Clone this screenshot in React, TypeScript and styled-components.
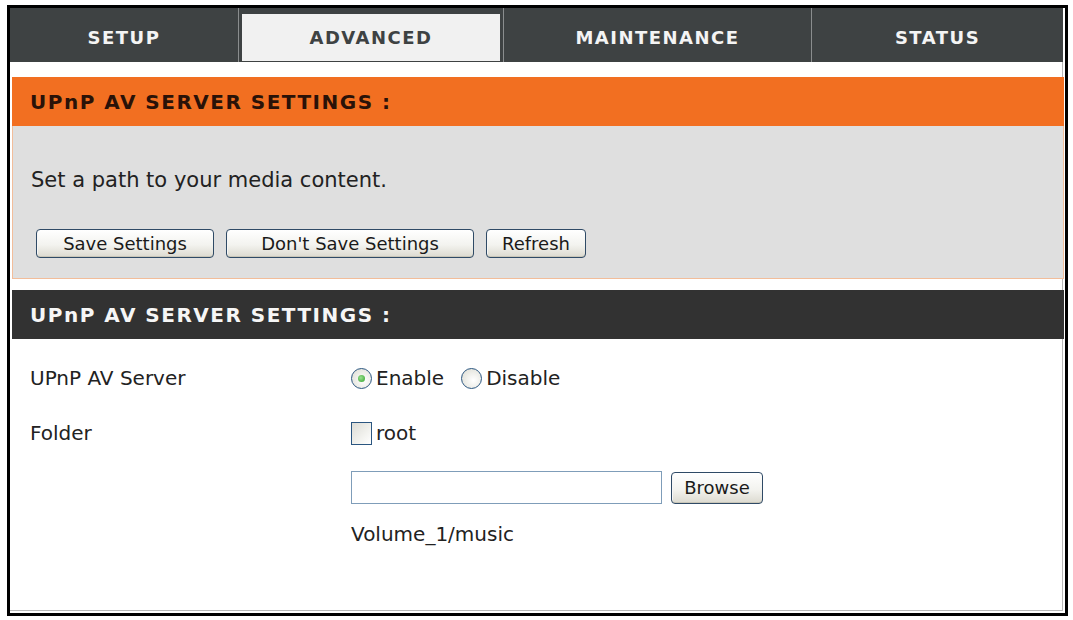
import React from 'react';
import styled, { createGlobalStyle } from 'styled-components';

const GlobalStyle = createGlobalStyle`
  html, body {
    margin: 0;
    padding: 0;
    background: #ffffff;
  }
  body {
    font-family: "DejaVu Sans", Verdana, sans-serif;
    color: #222222;
  }
`;

const Frame = styled.div`
  box-sizing: border-box;
  width: 1061px;
  height: 611px;
  margin: 5px 0 0 7px;
  border: 3px solid #000000;
  background: #ffffff;
  box-shadow: inset -2px -2px 0 #ffffff, inset -3px -3px 0 #b8b8b8;
  display: flex;
  flex-direction: column;
`;

const TabBar = styled.div`
  display: grid;
  grid-template-columns: 228px 264px 307px 1fr;
  column-gap: 1px;
  height: 54px;
  margin-right: 2px;
  background: #8a8d8e;
`;

const Tab = styled.div<{ $active?: boolean }>`
  display: flex;
  align-items: center;
  justify-content: center;
  background: ${p => (p.$active ? '#f1f1f1' : '#3e4243')};
  color: ${p => (p.$active ? '#3e4243' : '#f4f4f4')};
  border: ${p => (p.$active ? '3px solid #3e4243' : 'none')};
  border-top-width: ${p => (p.$active ? '6px' : '0')};
  border-bottom-width: ${p => (p.$active ? '1px' : '0')};
  font-family: "DejaVu Sans", Verdana, sans-serif;
  font-weight: bold;
  font-size: 18px;
  letter-spacing: 1.5px;
  padding-top: ${p => (p.$active ? '0' : '4px')};
`;

const Section = styled.div<{ $top: number }>`
  margin: ${p => p.$top}px 1px 0 2px;
`;

const SectionHead = styled.div<{ $tone: 'orange' | 'dark' }>`
  height: 49px;
  display: flex;
  align-items: center;
  padding-left: 18px;
  background: ${p => (p.$tone === 'orange' ? '#f26f21' : '#323232')};
  color: ${p => (p.$tone === 'orange' ? '#2a1208' : '#f6f6f6')};
  font-family: "DejaVu Sans", Verdana, sans-serif;
  font-weight: bold;
  font-size: 20px;
  letter-spacing: 1.5px;
`;

const GreyBox = styled.div`
  box-sizing: border-box;
  height: 153px;
  background: #dfdfdf;
  border: 1px solid #f2bd9a;
  border-top: none;
  padding: 42px 0 0 18px;
`;

const Description = styled.div`
  font-size: 21px;
  line-height: 24px;
  color: #222222;
`;

const ButtonRow = styled.div`
  display: flex;
  gap: 12px;
  margin-top: 37px;
  padding-left: 5px;
`;

const XPButton = styled.button<{ $w: number; $h?: number }>`
  box-sizing: border-box;
  width: ${p => p.$w}px;
  height: ${p => p.$h ?? 29}px;
  padding: 0;
  border: 1px solid #2f4a66;
  border-radius: 4px;
  background: linear-gradient(#ffffff 0%, #f3f3ef 55%, #dcdad0 100%);
  box-shadow: inset 0 -1px 0 #c9c6b8, inset 1px 0 0 #f6f6f6;
  font-family: "DejaVu Sans", Verdana, sans-serif;
  font-size: 18px;
  color: #1a1a1a;
`;

const FormArea = styled.div`
  margin: 0 1px 0 2px;
  padding: 19px 0 0 18px;
  display: grid;
  grid-template-columns: 321px 1fr;
  align-items: center;
`;

const Label = styled.div<{ $h: number; $gap?: number }>`
  height: ${p => p.$h}px;
  margin-top: ${p => p.$gap ?? 0}px;
  display: flex;
  align-items: center;
  font-size: 20px;
  color: #222222;
`;

const Field = styled.div<{ $h: number; $gap?: number }>`
  height: ${p => p.$h}px;
  margin-top: ${p => p.$gap ?? 0}px;
  display: flex;
  align-items: center;
  font-size: 20px;
  color: #222222;
`;

const Radio = styled.span<{ $on?: boolean }>`
  box-sizing: border-box;
  width: 21px;
  height: 21px;
  border-radius: 50%;
  border: 1px solid #2b5680;
  background: radial-gradient(circle at 60% 60%, #ffffff 0%, #e6e6df 70%, #d4d2c8 100%);
  display: inline-flex;
  align-items: center;
  justify-content: center;
  margin-right: 4px;
  &::after {
    content: '';
    width: 7px;
    height: 7px;
    border-radius: 50%;
    background: ${p => (p.$on ? 'radial-gradient(circle at 40% 40%, #9be08f, #2fa22a)' : 'transparent')};
  }
`;

const Gap = styled.span`
  width: 17px;
`;

const Checkbox = styled.span`
  box-sizing: border-box;
  width: 21px;
  height: 23px;
  border: 1px solid #2b5680;
  background: linear-gradient(135deg, #dcdcd6 0%, #f2f2ee 60%, #ffffff 100%);
  margin-right: 4px;
`;

const TextInput = styled.input`
  box-sizing: border-box;
  width: 311px;
  height: 33px;
  border: 1px solid #7f9db9;
  background: #ffffff;
  margin: 0 9px 0 0;
`;

const EmptyCell = styled.div``;

export default function App() {
  return (
    <>
      <GlobalStyle />
      <Frame>
        <TabBar>
          <Tab>SETUP</Tab>
          <Tab $active>ADVANCED</Tab>
          <Tab>MAINTENANCE</Tab>
          <Tab>STATUS</Tab>
        </TabBar>

        <Section $top={15}>
          <SectionHead $tone="orange">UPnP AV SERVER SETTINGS :</SectionHead>
          <GreyBox>
            <Description>Set a path to your media content.</Description>
            <ButtonRow>
              <XPButton $w={178}>Save Settings</XPButton>
              <XPButton $w={248}>Don't Save Settings</XPButton>
              <XPButton $w={100}>Refresh</XPButton>
            </ButtonRow>
          </GreyBox>
        </Section>

        <Section $top={11}>
          <SectionHead $tone="dark">UPnP AV SERVER SETTINGS :</SectionHead>
        </Section>

        <FormArea>
          <Label $h={40}>UPnP AV Server</Label>
          <Field $h={40}>
            <Radio $on />
            Enable
            <Gap />
            <Radio />
            Disable
          </Field>

          <Label $h={40} $gap={15}>Folder</Label>
          <Field $h={40} $gap={15}>
            <Checkbox />
            root
          </Field>

          <EmptyCell />
          <Field $h={33} $gap={18}>
            <TextInput type="text" />
            <XPButton $w={92} $h={32}>Browse</XPButton>
          </Field>

          <EmptyCell />
          <Field $h={24} $gap={18}>Volume_1/music</Field>
        </FormArea>
      </Frame>
    </>
  );
}
